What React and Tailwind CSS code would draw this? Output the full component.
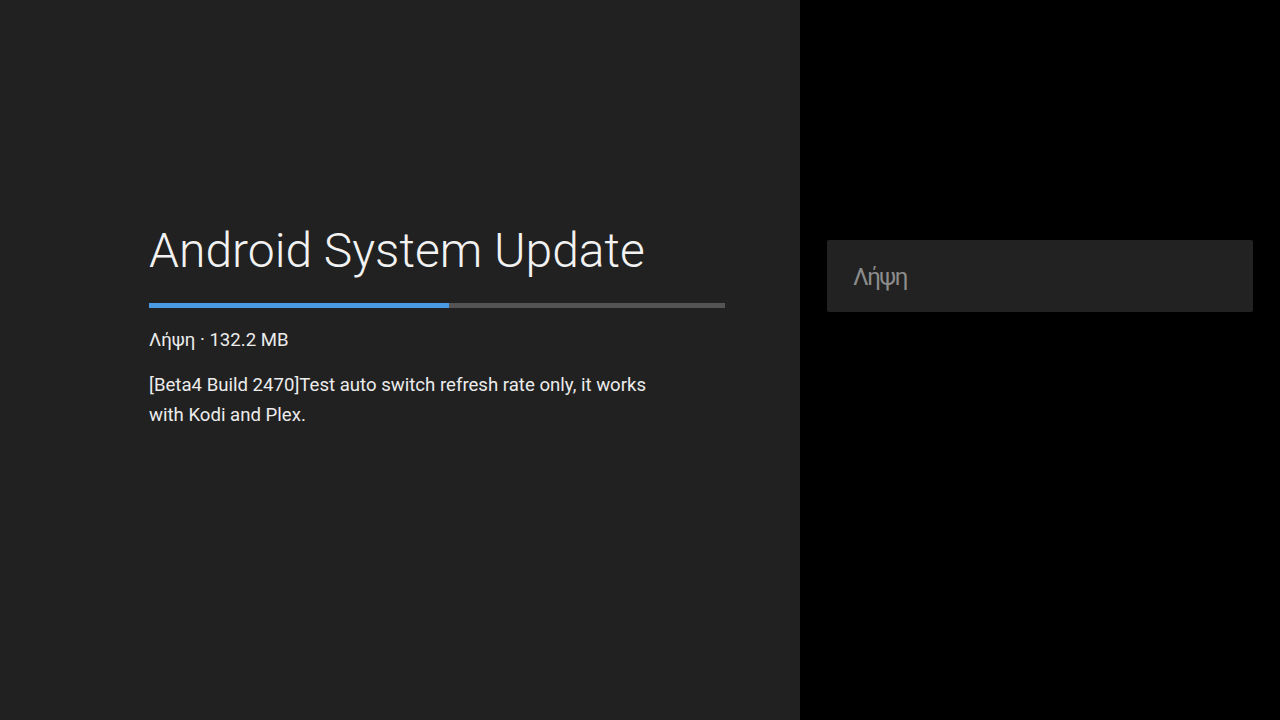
import React from "react";

export default function App() {
  return (
    <div className="flex h-[720px] w-[1280px] overflow-hidden bg-black font-['Roboto',sans-serif]">
      {/* Details */}
      <div className="w-[800px] bg-[#212121] pl-[149px] pt-[223px]">
        <h1 className="text-[48px] font-light leading-[56px] text-[#f2f2f2]">Android System Update</h1>
        <div className="mt-[24px] flex h-[5px] w-[576px] bg-[#545454]">
          <div className="h-full w-[300px] bg-[#4a9be6]" />
        </div>
        <p className="mt-[20px] text-[18.6px] leading-[24px] text-[#ececec]">Λήψη · 132.2 MB</p>
        <p className="mt-[18px] w-[520px] text-[18.6px] leading-[30px] text-[#ececec]">
          [Beta4 Build 2470]Test auto switch refresh rate only, it works with Kodi and Plex.
        </p>
      </div>

      {/* Actions */}
      <div className="flex-1 px-[27px] pt-[240px]">
        <div className="flex h-[72px] items-center rounded-[2px] bg-[#222222] px-[26px]">
          <span className="mt-[2px] text-[24px] tracking-[-1.5px] text-[#8c8c8c]">Λήψη</span>
        </div>
      </div>
    </div>
  );
}
